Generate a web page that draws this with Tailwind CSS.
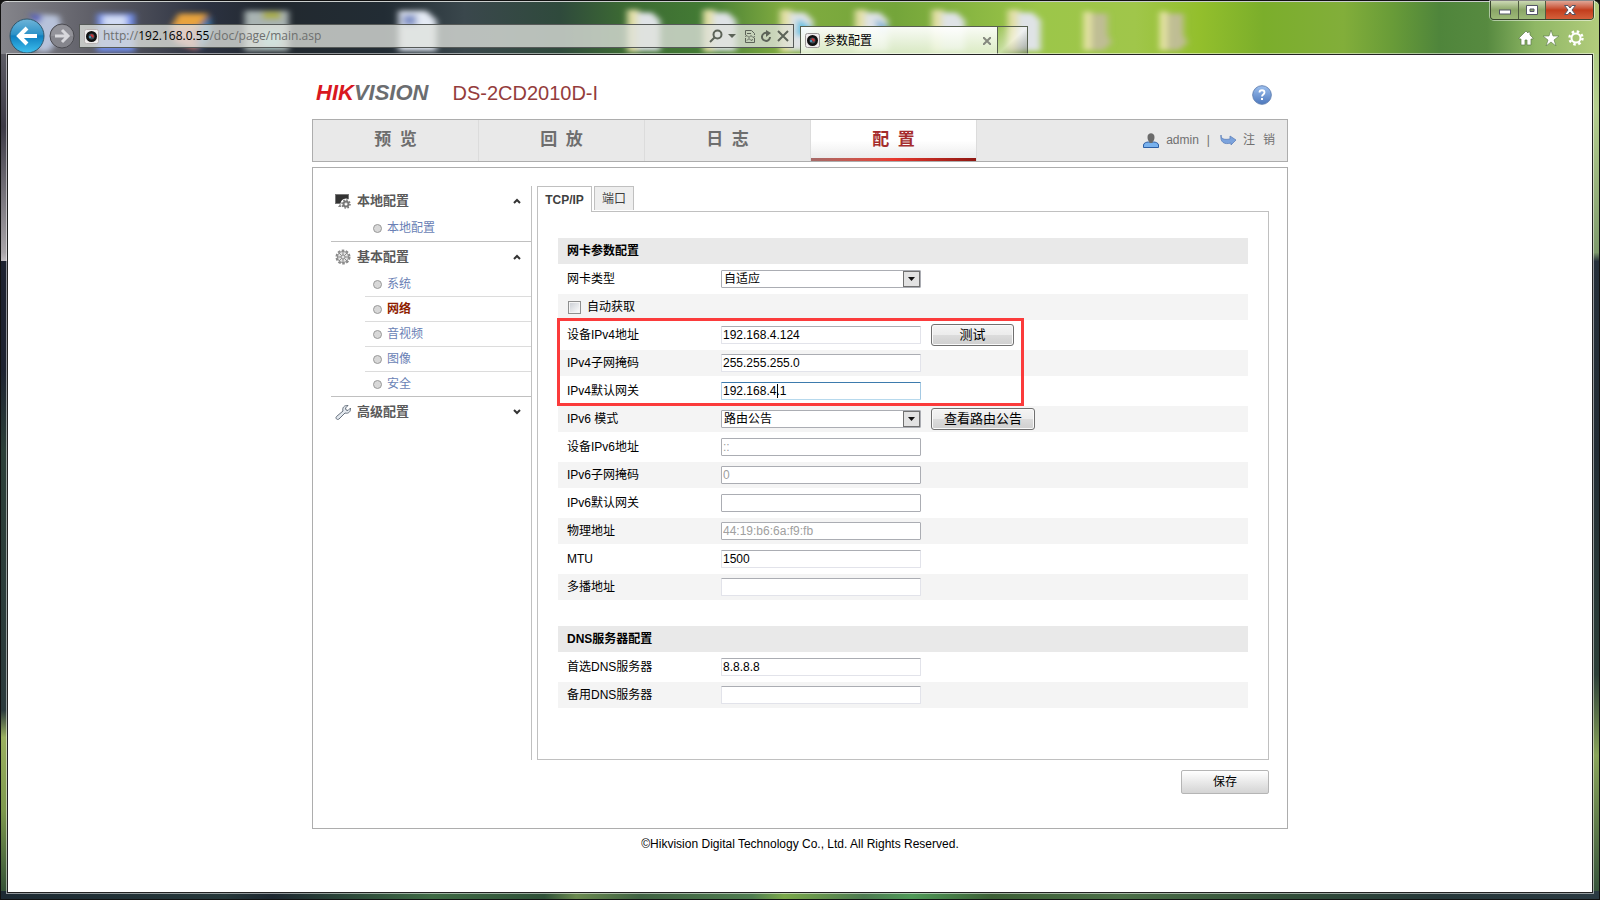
<!DOCTYPE html>
<html lang="zh-CN">
  <head>
    <meta charset="UTF-8" />
    <meta name="viewport" content="width=device-width, initial-scale=1.0" />
    <title>参数配置</title>
    <script src="https://cdn.jsdelivr.net/npm/@tailwindcss/browser@4"></script>
    <style>
      body {
        font-family: "Liberation Sans", "Noto Sans CJK SC", sans-serif;
      }

      /* glass window frame */
      #frame {
        background:
          linear-gradient(90deg, #1d2a33, #26383a 14%, #1d2730 17%, #2d4a3a 22%, #3f6b45 27%, #2f5138 34%, #6b8a50 36%, #3f6242 40%, #4f7d50 47%, #7aa84a 49%, #4c7a50 54%, #4f9a58 57%, #3c5f35 62%, #4c7048 70%, #33503a 80%, #26383a 90%, #2b3a42) bottom / 100% 8px no-repeat,
          linear-gradient(180deg, #74747a, #3c3a46 14%, #a8a4a8 28%, #c0bcc0 29%, #1d2230 29%, #1d2230 41%, #2c3f38 50%, #2b3a3c 79%, #9bb060 82%, #7f9a4e 90%, #2f4c35) left / 8px 100% no-repeat,
          linear-gradient(180deg, #a9c77c, #b5ce8e 12%, #7e9a6c 28%, #26303a 29%, #222c34 50%, #2c3f38 75%, #8aa55a 84%, #33503a) right / 8px 100% no-repeat,
          #2d3f3a;
      }

      .field {
        border: 1px solid #e2e3ea;
        border-top-color: #abadb3;
        border-radius: 1px;
        background: #fff;
      }
      .field:disabled,
      .field.plain {
        border-color: #abadb3;
        color: #a0a0a0;
      }
      .field.active {
        border-color: #3d7bad #a4c9e3 #b7d9ed #b5cfe7;
      }

      .btn {
        border: 1px solid #707070;
        border-radius: 3px;
        background: linear-gradient(#f4f4f4, #ececec 48%, #dcdcdc 50%, #cfcfcf);
        box-shadow: inset 0 0 0 1px #fafafa;
      }
    </style>
  </head>
  <body class="bg-[#111]">
    <div id="frame" class="relative flex min-h-screen flex-col rounded-t-md border border-[#111]">
      <!-- desktop seen through the title bar -->
      <svg class="absolute inset-x-0 top-0 h-[53px] w-full rounded-t-md border-t border-white/75" viewBox="0 0 1600 54" preserveAspectRatio="none" aria-hidden="true">
        <defs>
          <linearGradient id="sky">
            <stop offset="0" stop-color="#85858b" />
            <stop offset=".06" stop-color="#5d5d66" />
            <stop offset=".13" stop-color="#2b3140" />
            <stop offset=".17" stop-color="#22292f" />
            <stop offset=".24" stop-color="#222c34" />
            <stop offset=".29" stop-color="#3a474c" />
            <stop offset=".35" stop-color="#2f4a3c" />
            <stop offset=".39" stop-color="#3c6a33" />
            <stop offset=".44" stop-color="#437b34" />
            <stop offset=".49" stop-color="#81ac40" />
            <stop offset=".56" stop-color="#74a53a" />
            <stop offset=".65" stop-color="#9cc649" />
            <stop offset=".71" stop-color="#a0c64a" />
            <stop offset=".75" stop-color="#93bf2c" />
            <stop offset=".79" stop-color="#7bae2b" />
            <stop offset=".84" stop-color="#82ae3a" />
            <stop offset=".87" stop-color="#699c38" />
            <stop offset=".9" stop-color="#4f853b" />
            <stop offset=".93" stop-color="#578a40" />
            <stop offset=".96" stop-color="#8fb765" />
            <stop offset="1" stop-color="#b2cc7c" />
          </linearGradient>
          <filter id="blur" x="-20%" y="-20%" width="140%" height="140%"><feGaussianBlur stdDeviation="3" /></filter>
          <g id="folder">
            <path d="M0 8h12v44H0z" fill="#e2dfa6" />
            <path d="M10 11h15l8 8v32H10z" fill="#dfe3e6" />
          </g>
          <g id="closed">
            <path d="M0 10h8v40H0z" fill="#e6e3a6" />
            <path d="M8 12h16v22l4 8-8 8H8z" fill="#bfbd94" />
          </g>
        </defs>
        <rect width="1600" height="54" fill="url(#sky)" />
        <g filter="url(#blur)">
          <path d="M30 12l28 2 4 20-14 18H36z" fill="#b8c2da" />
          <path d="M28 12l14 2-6 10z" fill="#4a55b8" />
          <path d="M96 12h38v40H96z" fill="#6f8be6" />
          <path d="M102 14h24v12h-24z" fill="#d3ddf5" />
          <path d="M178 12h30l-10 14h-28z" fill="#e8a33c" />
          <path d="M170 26h26v24l-22-8z" fill="#dd7f74" />
          <path d="M198 26l12-12v22l-12 14z" fill="#3d7fb5" />
          <path d="M244 9h44v42h-44z" fill="#a9b3b2" />
          <path d="M262 10h18v8h-18z" fill="#a9ad48" />
          <path d="M262 30h18v16h-18z" fill="#9fe0dc" />
          <path d="M398 9h28l10 10v32h-38z" fill="#e4eaf4" />
          <path d="M402 13h14v12h-14z" fill="#8696c8" />
          <use href="#folder" x="627" />
          <use href="#folder" x="703" />
          <use href="#folder" x="780" />
          <use href="#folder" x="855" />
          <use href="#folder" x="932" />
          <use href="#folder" x="1008" />
          <use href="#closed" x="1084" />
          <use href="#closed" x="1160" />
          <path d="M798 17l14 10-4 8h-12z" fill="#57bfe0" />
          <path d="M876 17l12 8v8h-10z" fill="#7fb2d6" />
        </g>
      </svg>

      <header class="relative flex h-[53px] shrink-0 items-end">
        <div class="flex w-1/2 items-center gap-1 pl-2">
          <button aria-label="Back" class="h-9 w-9 shrink-0">
            <svg viewBox="0 0 36 36" class="h-9 w-9">
              <defs>
                <linearGradient id="back" x2="0" y2="1">
                  <stop offset="0" stop-color="#6fb4d8" />
                  <stop offset=".45" stop-color="#2f93c8" />
                  <stop offset=".5" stop-color="#0f7fc0" />
                  <stop offset="1" stop-color="#3fc0ee" />
                </linearGradient>
              </defs>
              <circle cx="18" cy="18" r="17" fill="url(#back)" stroke="#33566b" />
              <path d="M28 18H11M18 10l-8 8 8 8" fill="none" stroke="#fff" stroke-width="4" />
            </svg>
          </button>
          <button aria-label="Forward" class="h-[26px] w-[26px] shrink-0">
            <svg viewBox="0 0 26 26" class="h-[26px] w-[26px]">
              <circle cx="13" cy="13" r="12" fill="#85858c" stroke="#4c4c52" />
              <path d="M2 13a11 11 0 0 1 22 0z" fill="#a2a2a8" opacity=".5" />
              <path d="M6 13h12M13 7l6 6-6 6" fill="none" stroke="#d8d8dc" stroke-width="3" />
            </svg>
          </button>
          <div class="mr-[6px] flex h-6 flex-1 items-center border border-[#565a58] bg-[#dfe1dd]/78 px-1">
            <svg viewBox="0 0 15 15" class="h-[15px] w-[15px] shrink-0">
              <rect x=".5" y=".5" width="14" height="14" rx="2" fill="#f1eeee" stroke="#b9b3b3" />
              <circle cx="7.500" cy="7.500" r="5.500" fill="#111" />
              <circle cx="7.500" cy="7.500" r="3" fill="#3d4c58" />
              <path d="M6 6l2-1 2 2-1 2z" fill="#c93535" />
              <circle cx="6" cy="8" r="1" fill="#53a8d0" />
            </svg>
            <div class="ml-1 flex-1 truncate font-['Open_Sans'] text-[12px] leading-5 text-[#6d6f6e]">http://<span class="text-black">192.168.0.55</span>/doc/page/main.asp</div>
            <div class="flex items-center gap-[5px] text-[#5c6358]">
              <button aria-label="Search"><svg viewBox="0 0 14 14" class="h-[14px] w-[14px]" fill="none" stroke="currentColor" stroke-width="2"><circle cx="8.500" cy="5.500" r="4" /><path d="M5.500 8.500L1 13" /></svg></button>
              <button aria-label="Show menu"><svg viewBox="0 0 8 5" class="h-[5px] w-2"><path d="M0 0h8L4 4z" fill="currentColor" /></svg></button>
              <button aria-label="Compatibility view" class="ml-1"><svg viewBox="0 0 10 13" class="h-[13px] w-[10px]" fill="none" stroke="currentColor"><path d="M.5 5V.5h6l3 3V5M.5 8v4.500h9V8M0 6.500l2-1 2 2 2-2 2 2 2-1M2 3.500h4M2 10.500l2-2 2 2 2-1" /></svg></button>
              <button aria-label="Refresh"><svg viewBox="0 0 12 13" class="h-[13px] w-3"><path d="M7 3A4 4 0 1 0 10 7" fill="none" stroke="currentColor" stroke-width="2" /><path d="M6 0l5 3-5 4z" fill="currentColor" /></svg></button>
              <button aria-label="Stop"><svg viewBox="0 0 12 12" class="h-3 w-3"><path d="M1 1l10 10M11 1L1 11" stroke="currentColor" stroke-width="2" /></svg></button>
            </div>
          </div>
        </div>
        <div class="flex h-7 w-[198px] items-center border border-b-0 border-[#565f4e] bg-linear-to-b from-white/95 to-[#e9f4da]/85 px-1">
          <svg viewBox="0 0 15 15" class="h-[15px] w-[15px] shrink-0">
            <rect x=".5" y=".5" width="14" height="14" rx="2" fill="#f1eeee" stroke="#9a9696" />
            <circle cx="7.500" cy="7.500" r="5.500" fill="#111" />
            <circle cx="7.500" cy="7.500" r="3" fill="#3d4c58" />
            <path d="M6 6l2-1 2 2-1 2z" fill="#c93535" />
            <circle cx="6" cy="8" r="1" fill="#53a8d0" />
          </svg>
          <span class="ml-1 flex-1 text-[12px] leading-5 text-black">参数配置</span>
          <button aria-label="Close tab"><svg viewBox="0 0 8 8" class="mr-[2px] h-2 w-2"><path d="M0 0l8 8M8 0L0 8" stroke="#85887f" stroke-width="2" /></svg></button>
        </div>
        <button aria-label="New tab" class="h-7 w-[30px] border border-b-0 border-l-0 border-[#565f4e] bg-linear-to-br from-white/10 via-white/50 to-[#5a6350]/50"></button>
        <div class="mr-[15px] mb-2 ml-auto flex items-center gap-[9px]">
          <button aria-label="Home"><svg viewBox="0 0 16 16" class="h-4 w-4"><path d="M8 1L1 8v1h2v6h4v-5h2v5h4V9h2V8l-3-3V2h-2v1z" fill="#fff" stroke="#5d7a4a" stroke-width=".7" /></svg></button>
          <button aria-label="Favorites"><svg viewBox="0 0 16 16" class="h-4 w-4"><path d="M8 0l2 6h6l-5 4 2 6-5-4-5 4 2-6-5-4h6z" fill="#fff" stroke="#5d7a4a" stroke-width=".6" /></svg></button>
          <button aria-label="Tools"><svg viewBox="0 0 16 16" class="h-4 w-4" fill="none" stroke="#fff"><circle cx="8" cy="8" r="4.500" stroke-width="2" /><circle cx="8" cy="8" r="6.500" stroke-width="2.400" stroke-dasharray="2.500 2.600" /></svg></button>
        </div>
        <div class="absolute top-0 right-[5px] flex h-[19px] overflow-hidden rounded-b-[4px] border border-t-0 border-[#39452f] shadow-[0_0_0_1px_rgba(255,255,255,0.5)]">
          <button aria-label="Minimize" class="flex w-7 items-center justify-center border-r border-[#4f5c40] bg-linear-to-b from-[#ccd9b4] via-[#8ba667] to-[#9dba78]">
            <svg viewBox="0 0 12 6" class="mt-1 h-[6px] w-3"><rect x=".5" y="1" width="11" height="4" fill="#fff" stroke="#535666" /></svg>
          </button>
          <button aria-label="Maximize" class="flex w-[27px] items-center justify-center border-r border-[#4f5c40] bg-linear-to-b from-[#ccd9b4] via-[#8ba667] to-[#9dba78]">
            <svg viewBox="0 0 12 10" class="h-[10px] w-3"><path d="M.5.500h11v9H.5zM4 4v2.500h4V4z" fill="#fff" stroke="#535666" fill-rule="evenodd" /></svg>
          </button>
          <button aria-label="Close" class="flex w-[47px] items-center justify-center bg-linear-to-b from-[#dfa595] via-[#c23d1c] to-[#d4603a]">
            <svg viewBox="0 0 12 10" class="h-[10px] w-3"><path d="M.5.500h3.500l2 2.500 2-2.500h3.500L8 5l3.500 4.500H8L6 7 4 9.500H.5L4 5z" fill="#fff" stroke="#535666" /></svg>
          </button>
        </div>
      </header>

      <div class="relative mx-[6px] mb-[6px] flex-1 border border-[#222] bg-white px-4 shadow-[0_0_0_1px_rgba(255,255,255,0.5)]">
        <div class="mx-auto w-full max-w-[976px]">
          <div class="flex h-16 items-center pt-3 pl-1">
            <div class="text-[22px] leading-7 font-bold text-[#6b6d70] italic"><span class="text-[#d9181f]">HIK</span>VISION</div>
            <h1 class="ml-6 text-[20px] leading-7 text-[#943c3c]">DS-2CD2010D-I</h1>
            <button aria-label="帮助" class="mt-1 mr-4 ml-auto">
              <svg viewBox="0 0 20 20" class="h-5 w-5">
                <defs>
                  <linearGradient id="help" x2="0" y2="1"><stop offset="0" stop-color="#9dc0ef" /><stop offset="1" stop-color="#4d78bd" /></linearGradient>
                </defs>
                <circle cx="10" cy="10" r="9.300" fill="url(#help)" stroke="#6685b5" />
                <path d="M7.500 7.500c0-3 5-3 5 0 0 2-2.500 2-2.500 4" fill="none" stroke="#fff" stroke-width="1.800" />
                <path d="M9 13h2v2H9z" fill="#fff" />
              </svg>
            </button>
          </div>

          <nav class="flex h-[43px] border border-[#adadad] bg-[#e9e9e9] text-[17px] leading-6 font-bold text-[#6e6e6e]">
            <a href="#" class="w-[166px] border-r border-[#dcdcdc] pt-2 text-center">预&ensp;览</a>
            <a href="#" class="w-[166px] border-r border-[#dcdcdc] pt-2 text-center">回&ensp;放</a>
            <a href="#" class="w-[166px] border-r border-[#dcdcdc] pt-2 text-center">日&ensp;志</a>
            <a href="#" class="flex w-[166px] flex-col border-r border-[#dcdcdc] bg-linear-to-b from-white via-white to-[#e9e9e9] pt-2 text-center text-[#a52c2c]">
              配&ensp;置
              <span class="mt-auto h-[3px] bg-linear-to-r from-[#a56a68] via-[#e8382e] to-[#8e1812]"></span>
            </a>
            <div class="mr-3 mb-[2px] ml-auto flex items-center text-[12px] leading-4 font-normal text-[#707070]">
              <svg viewBox="0 0 16 16" class="mr-[7px] h-4 w-4">
                <path d="M.5 15.500V13c0-2 3-3 5-3h5c2 0 5 1 5 3v2.500z" fill="#79b2ee" stroke="#2d5fa5" />
                <path d="M4.500 5c0-5 7-5 7 0 0 3-1 4-2 5v1h-3v-1c-1-1-2-2-2-5z" fill="#6b6b6b" />
              </svg>
              <span>admin</span>
              <span class="mx-2">|</span>
              <svg viewBox="0 0 17 12" class="mr-[6px] ml-[2px] h-3 w-[17px]"><path d="M1 1c0 4 3 5 9 4V2l6 4-5 5V9C4 11 0 8 1 1z" fill="#7ba3dd" stroke="#5f82bb" stroke-width=".8" /></svg>
              <a href="#" class="flex gap-2"><span>注</span> <span>销</span></a>
            </div>
          </nav>

          <main class="mt-[5px] border border-[#adadad] px-[18px] pt-[18px] pb-[34px]">
            <div class="flex">
              <aside class="w-[201px] shrink-0 border-r border-[#c0c0c0] text-[12px] text-[#6a7fb5]">
                <section class="border-b border-[#c0c0c0]">
                  <h2 class="flex h-[29px] items-center pr-[10px] pl-1 text-[13px] font-bold text-[#5a5a5a]">
                    <svg viewBox="0 0 16 16" class="mr-[6px] h-4 w-4">
                      <rect x=".5" y="1.500" width="13" height="9" fill="#333" stroke="#777" />
                      <path d="M5 11h4l1 3H3z" fill="#888" />
                      <circle cx="11" cy="11" r="3" fill="none" stroke="#fff" stroke-width="5" />
                      <circle cx="11" cy="11" r="2.500" fill="none" stroke="#777" stroke-width="2" />
                      <circle cx="11" cy="11" r="4" fill="none" stroke="#777" stroke-width="1.500" stroke-dasharray="1.600 1.500" />
                    </svg>
                    本地配置
                    <svg viewBox="0 0 8 6" class="ml-auto h-[6px] w-2"><path d="M1 5l3-3 3 3" fill="none" stroke="#333" stroke-width="2" /></svg>
                  </h2>
                  <a href="#" class="ml-[34px] flex h-[26px] items-center pl-2"><span class="mr-[5px] h-[9px] w-[9px] rounded-full border border-[#999] bg-[#d8d8d8]"></span>本地配置</a>
                </section>
                <section class="border-b border-[#c0c0c0]">
                  <h2 class="flex h-[29px] items-center pr-[10px] pl-1 text-[13px] font-bold text-[#5a5a5a]">
                    <svg viewBox="0 0 16 16" class="mr-[6px] h-4 w-4" fill="none" stroke="#8b8b8b">
                      <circle cx="8" cy="8" r="5.500" fill="#e4e4e4" />
                      <circle cx="8" cy="8" r="6.500" stroke-width="2" stroke-dasharray="2.600 1.480" />
                      <circle cx="8" cy="8" r="2" />
                      <path d="M8 2.500V6M8 10v3.500M2.500 8H6M10 8h3.500M4 4l2.500 2.500M9.500 9.500L12 12M12 4L9.500 6.500M6.500 9.500L4 12" />
                    </svg>
                    基本配置
                    <svg viewBox="0 0 8 6" class="ml-auto h-[6px] w-2"><path d="M1 5l3-3 3 3" fill="none" stroke="#333" stroke-width="2" /></svg>
                  </h2>
                  <ul class="ml-[34px] divide-y divide-[#dcdcdc] pt-px">
                    <li><a href="#" class="flex h-6 items-center pl-2"><span class="mr-[5px] h-[9px] w-[9px] rounded-full border border-[#999] bg-[#d8d8d8]"></span>系统</a></li>
                    <li><a href="#" class="flex h-6 items-center pl-2 font-bold text-[#8e1d00]"><span class="mr-[5px] h-[9px] w-[9px] rounded-full border border-[#999] bg-[#d8d8d8]"></span>网络</a></li>
                    <li><a href="#" class="flex h-6 items-center pl-2"><span class="mr-[5px] h-[9px] w-[9px] rounded-full border border-[#999] bg-[#d8d8d8]"></span>音视频</a></li>
                    <li><a href="#" class="flex h-6 items-center pl-2"><span class="mr-[5px] h-[9px] w-[9px] rounded-full border border-[#999] bg-[#d8d8d8]"></span>图像</a></li>
                    <li><a href="#" class="flex h-6 items-center pl-2"><span class="mr-[5px] h-[9px] w-[9px] rounded-full border border-[#999] bg-[#d8d8d8]"></span>安全</a></li>
                  </ul>
                </section>
                <section>
                  <h2 class="flex h-[29px] items-center pr-[10px] pl-1 text-[13px] font-bold text-[#5a5a5a]">
                    <svg viewBox="0 0 16 16" class="mr-[6px] h-4 w-4"><path d="M1.500 12.500L8 7c-1-3 1-6 5-5.500L10.500 4l.5 2 2 .5L15.500 4c.5 3.500-2 6-5.500 5l-6 6c-2 1.500-4-1-2.500-2.500z" fill="#e3e8ee" stroke="#66707d" /></svg>
                    高级配置
                    <svg viewBox="0 0 8 6" class="ml-auto h-[6px] w-2"><path d="M1 1l3 3 3-3" fill="none" stroke="#333" stroke-width="2" /></svg>
                  </h2>
                </section>
              </aside>

              <div class="ml-[5px] min-w-0 flex-1">
                <div class="relative z-10 flex items-start gap-[2px] text-[12px] leading-4">
                  <button class="-mb-px h-[26px] w-[55px] border border-b-0 border-[#c0c0c0] bg-white font-bold text-[#3f3f3f]">TCP/IP</button>
                  <button class="h-6 w-10 border border-b-0 border-[#c0c0c0] bg-[#eee] text-[#3f3f3f]">端口</button>
                </div>
                <form class="border border-[#c0c0c0] px-5 pt-[26px] pb-[51px] text-[12px] leading-4 text-black">
                  <h3 class="flex h-[26px] items-center bg-[#e9e9e9] pl-[9px] font-bold">网卡参数配置</h3>
                  <div class="relative mt-[2px] space-y-[2px]">
                    <div class="flex h-[26px] items-center pl-[9px]">
                      <label for="nic" class="w-[154px]">网卡类型</label>
                      <div class="relative">
                        <select id="nic" class="field plain block h-[18px] w-[200px] appearance-none pl-[2px] leading-4 text-black!"><option>自适应</option></select>
                        <svg viewBox="0 0 17 16" class="pointer-events-none absolute top-px right-px h-4 w-[17px]"><rect x=".5" y=".5" width="16" height="15" fill="#e2e2e2" stroke="#707070" /><path d="M5 6h7l-3.500 4z" fill="#111" /></svg>
                      </div>
                    </div>
                    <div class="flex h-[26px] items-center bg-[#f4f4f4] pl-[10px]">
                      <input id="dhcp" type="checkbox" class="mr-[6px] h-[13px] w-[13px] appearance-none border border-[#8e8f8f] bg-linear-to-br from-[#c8ccd2] to-white shadow-[inset_0_0_0_1px_#f4f4f4]" />
                      <label for="dhcp">自动获取</label>
                    </div>
                    <div class="flex h-[26px] items-center pl-[9px]">
                      <label for="ip4" class="w-[154px]">设备IPv4地址</label>
                      <input id="ip4" type="text" value="192.168.4.124" class="field h-[18px] w-[200px] pl-px" />
                      <button type="button" class="btn ml-[10px] h-[22px] w-[83px] text-[13px] leading-4">测试</button>
                    </div>
                    <div class="flex h-[26px] items-center bg-[#f4f4f4] pl-[9px]">
                      <label for="mask4" class="w-[154px]">IPv4子网掩码</label>
                      <input id="mask4" type="text" value="255.255.255.0" class="field h-[18px] w-[200px] pl-px" />
                    </div>
                    <div class="flex h-[26px] items-center pl-[9px]">
                      <label for="gw4" class="w-[154px]">IPv4默认网关</label>
                      <div class="relative">
                        <input id="gw4" type="text" value="192.168.4.1" class="field active block h-[18px] w-[200px] pl-px" />
                        <span class="absolute top-[2px] left-14 h-[14px] w-px bg-black"></span>
                      </div>
                    </div>
                    <div class="flex h-[26px] items-center bg-[#f4f4f4] pl-[9px]">
                      <label for="mode6" class="w-[154px]">IPv6 模式</label>
                      <div class="relative">
                        <select id="mode6" class="field plain block h-[18px] w-[200px] appearance-none pl-[2px] leading-4 text-black!"><option>路由公告</option></select>
                        <svg viewBox="0 0 17 16" class="pointer-events-none absolute top-px right-px h-4 w-[17px]"><rect x=".5" y=".5" width="16" height="15" fill="#e2e2e2" stroke="#707070" /><path d="M5 6h7l-3.500 4z" fill="#111" /></svg>
                      </div>
                      <button type="button" class="btn ml-[10px] h-[22px] w-[104px] text-[13px] leading-4">查看路由公告</button>
                    </div>
                    <div class="flex h-[26px] items-center pl-[9px]">
                      <label for="ip6" class="w-[154px]">设备IPv6地址</label>
                      <input id="ip6" type="text" value="::" disabled class="field h-[18px] w-[200px] pl-px" />
                    </div>
                    <div class="flex h-[26px] items-center bg-[#f4f4f4] pl-[9px]">
                      <label for="mask6" class="w-[154px]">IPv6子网掩码</label>
                      <input id="mask6" type="text" value="0" disabled class="field h-[18px] w-[200px] pl-px" />
                    </div>
                    <div class="flex h-[26px] items-center pl-[9px]">
                      <label for="gw6" class="w-[154px]">IPv6默认网关</label>
                      <input id="gw6" type="text" disabled class="field h-[18px] w-[200px] pl-px" />
                    </div>
                    <div class="flex h-[26px] items-center bg-[#f4f4f4] pl-[9px]">
                      <label for="mac" class="w-[154px]">物理地址</label>
                      <input id="mac" type="text" value="44:19:b6:6a:f9:fb" disabled class="field h-[18px] w-[200px] pl-px" />
                    </div>
                    <div class="flex h-[26px] items-center pl-[9px]">
                      <label for="mtu" class="w-[154px]">MTU</label>
                      <input id="mtu" type="text" value="1500" class="field h-[18px] w-[200px] pl-px" />
                    </div>
                    <div class="flex h-[26px] items-center bg-[#f4f4f4] pl-[9px]">
                      <label for="multicast" class="w-[154px]">多播地址</label>
                      <input id="multicast" type="text" class="field h-[18px] w-[200px] pl-px" />
                    </div>
                    <!-- marks the IPv4 rows -->
                    <div class="pointer-events-none absolute top-[52px] -left-px h-[88px] w-[467px] border-3 border-[#fb3b3b]"></div>
                  </div>

                  <h3 class="mt-[26px] flex h-[26px] items-center bg-[#e9e9e9] pl-[9px] font-bold">DNS服务器配置</h3>
                  <div class="mt-[2px] space-y-[2px]">
                    <div class="flex h-[26px] items-center pl-[9px]">
                      <label for="dns1" class="w-[154px]">首选DNS服务器</label>
                      <input id="dns1" type="text" value="8.8.8.8" class="field h-[18px] w-[200px] pl-px" />
                    </div>
                    <div class="flex h-[26px] items-center bg-[#f4f4f4] pl-[9px]">
                      <label for="dns2" class="w-[154px]">备用DNS服务器</label>
                      <input id="dns2" type="text" class="field h-[18px] w-[200px] pl-px" />
                    </div>
                  </div>
                </form>
              </div>
            </div>
            <div class="mt-[10px] flex justify-end">
              <button class="h-6 w-[88px] rounded-[2px] border border-[#b5b5b5] bg-linear-to-b from-white to-[#d4d4d4] text-[12px] leading-4 text-black">保存</button>
            </div>
          </main>

          <footer class="py-[7px] text-center text-[12px] leading-4 text-black">©Hikvision Digital Technology Co., Ltd. All Rights Reserved.</footer>
        </div>
      </div>
    </div>
  </body>
</html>
